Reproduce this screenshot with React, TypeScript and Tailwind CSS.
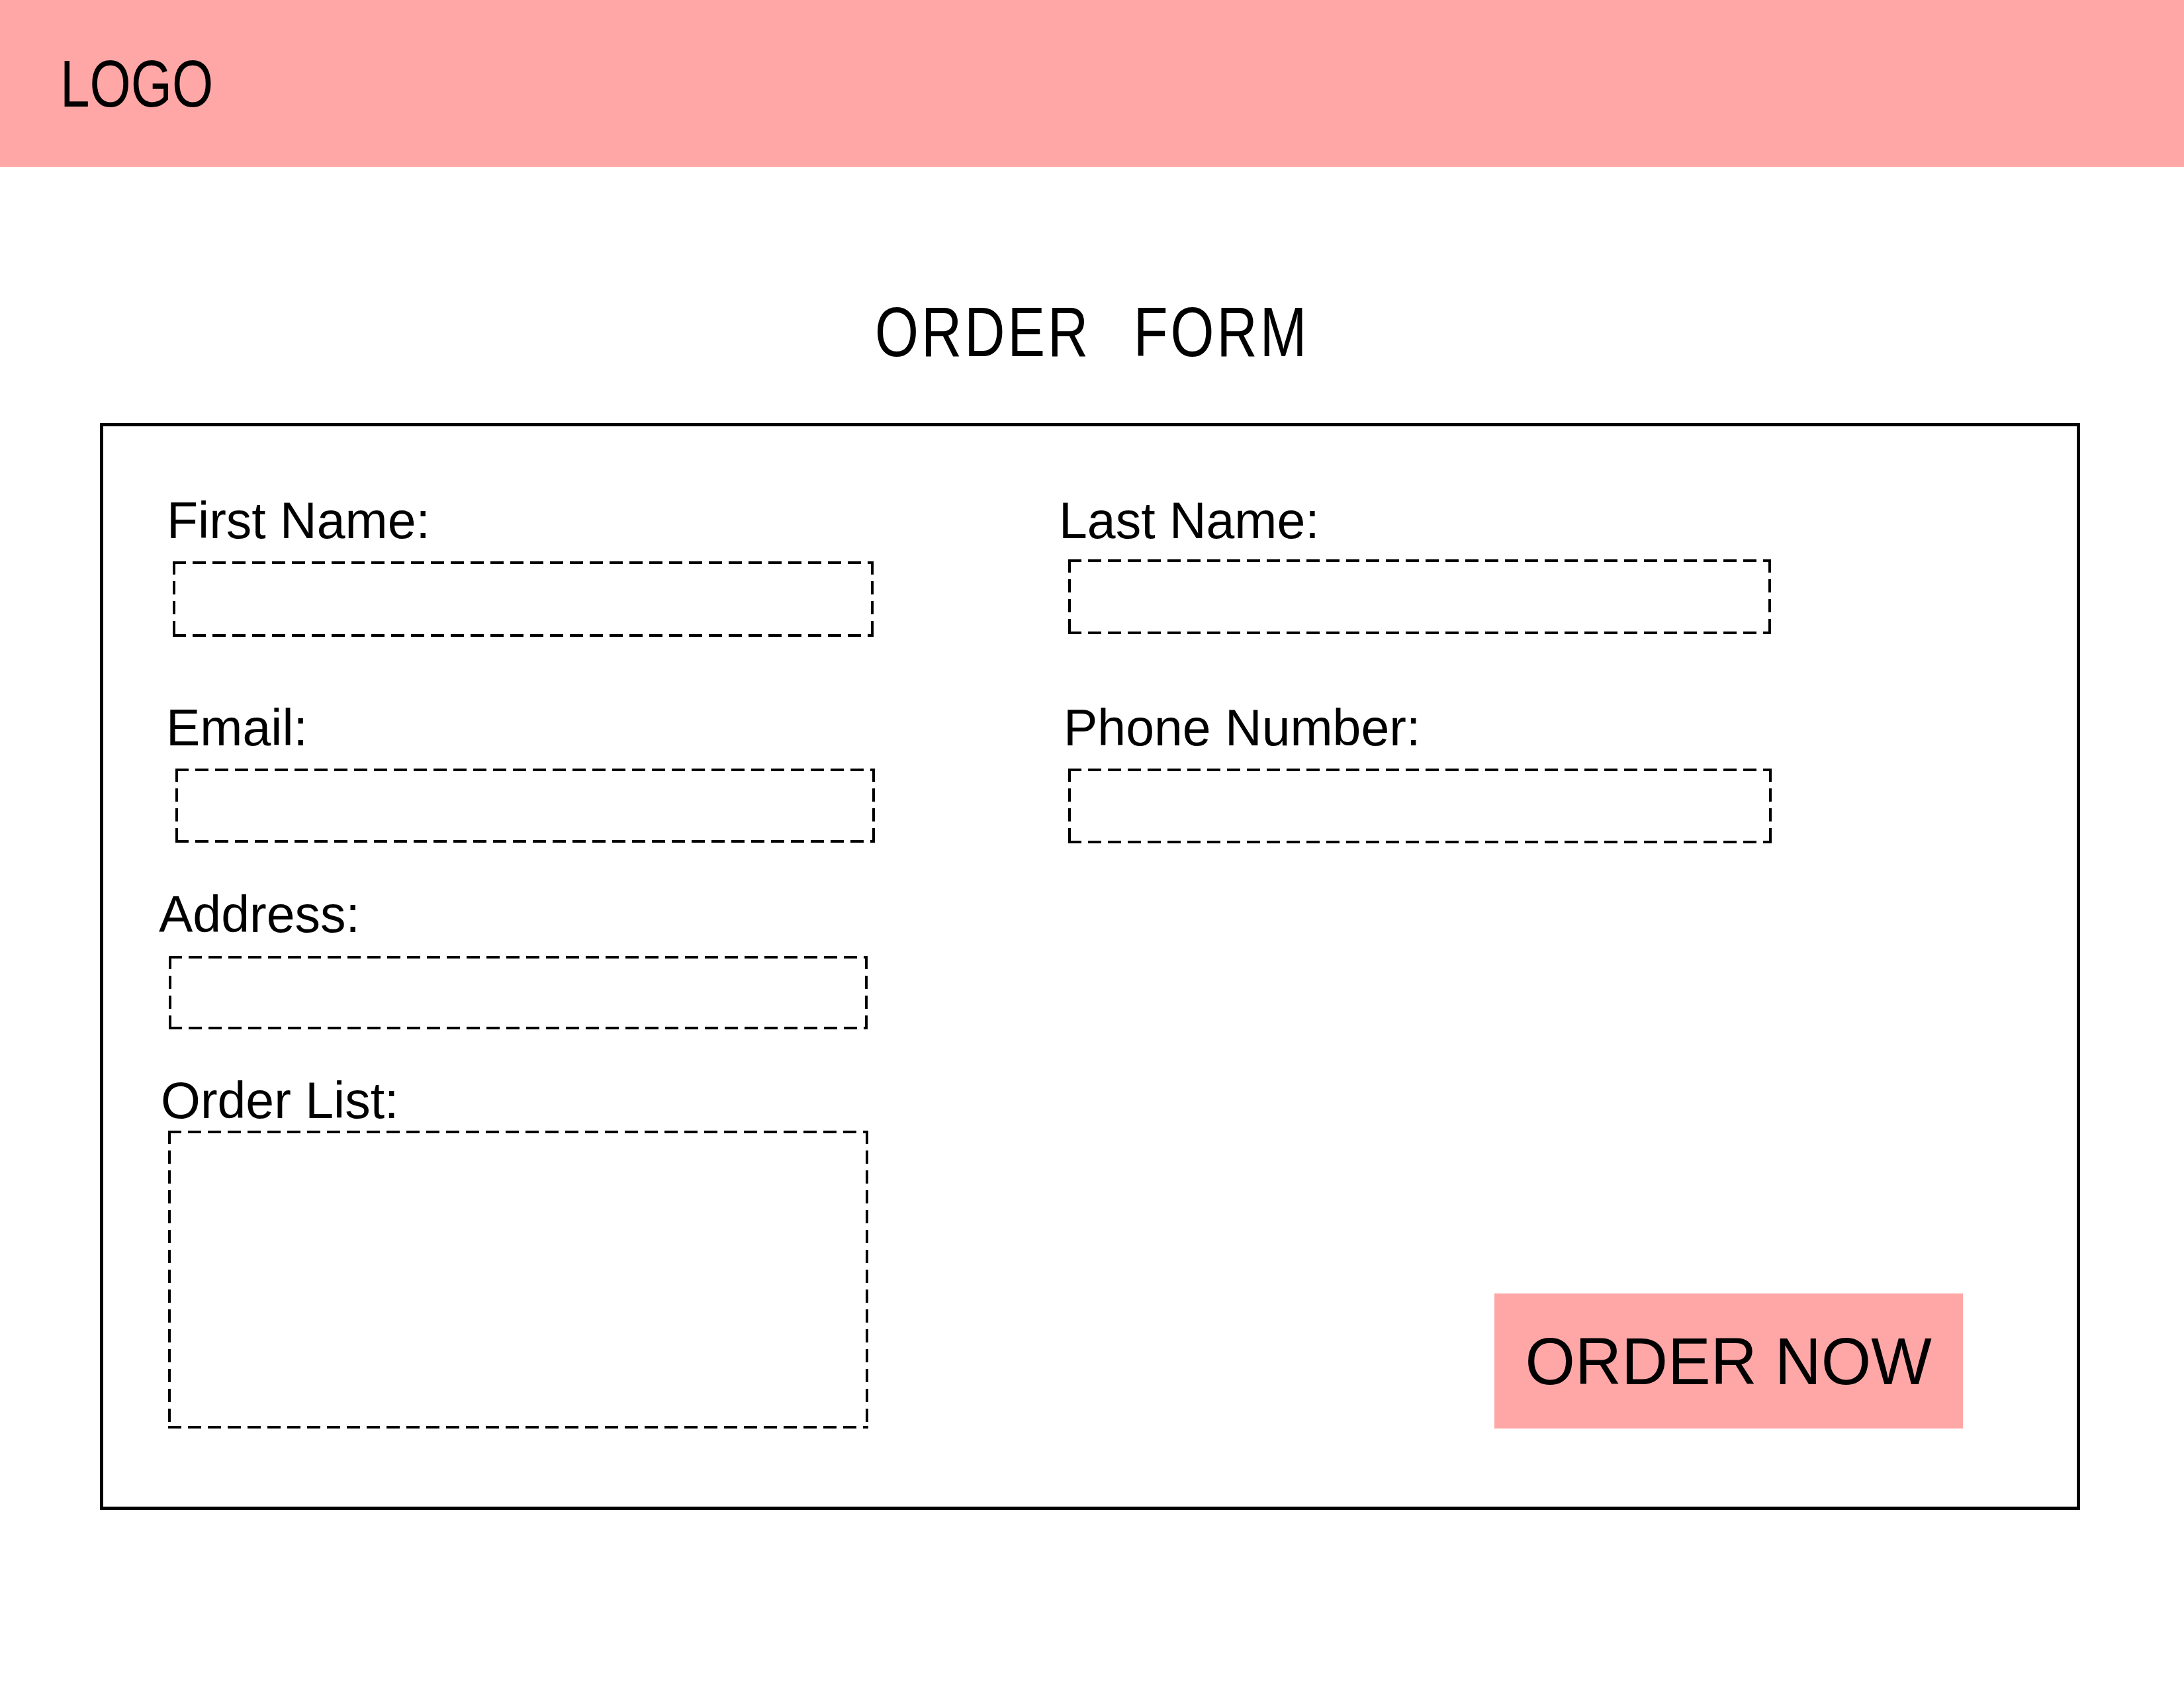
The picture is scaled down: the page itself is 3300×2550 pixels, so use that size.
const font = "font-['Liberation_Sans',Arial,sans-serif]";

// dashed outline drawn with gradients: 20px dash, 10px gap, 4px thick
const dashed =
  "[background:repeating-linear-gradient(90deg,#000_0_20px,transparent_20px_30px)_top_left/100%_4px_no-repeat,repeating-linear-gradient(90deg,#000_0_20px,transparent_20px_30px)_bottom_left/100%_4px_no-repeat,repeating-linear-gradient(180deg,#000_0_20px,transparent_20px_30px)_top_left/4px_100%_no-repeat,repeating-linear-gradient(180deg,#000_0_20px,transparent_20px_30px)_top_right/4px_100%_no-repeat]";

type FieldProps = {
  label: string;
  labelX: string;
  boxX: string;
  boxW: string;
  boxH: string;
  gap: string;
};

function Field({ label, labelX, boxX, boxW, boxH, gap }: FieldProps) {
  return (
    <div className="flex flex-col">
      <label className={`text-[77px] leading-none text-black ${labelX}`}>{label}</label>
      <div className={`${dashed} ${boxX} ${boxW} ${boxH} ${gap}`} />
    </div>
  );
}

export default function App() {
  return (
    <div className={`w-[3300px] h-[2550px] bg-white text-black ${font}`}>
      {/* header */}
      <header className="h-[252px] bg-[#ffa7a7] flex items-center pl-[91px]">
        <span className="text-[100px] leading-none inline-block scale-x-[0.8] origin-left">LOGO</span>
      </header>

      {/* title */}
      <div className="mt-[196px] flex justify-center">
        <h1 className="text-[106px] leading-none font-normal inline-block scale-x-[0.8] tracking-[5px] [word-spacing:46px]">
          ORDER FORM
        </h1>
      </div>

      {/* form card */}
      <form className="mt-[85px] ml-[151px] w-[2992px] border-[5px] border-black pt-[104px] pb-[118px] pl-[84px] pr-[172px] flex flex-col">
        <div className="flex">
          <div className="w-[1360px]">
            <Field label="First Name:" labelX="ml-[12px]" boxX="ml-[21px]" boxW="w-[1059px]" boxH="h-[114px]" gap="mt-[23px]" />
          </div>
          <Field label="Last Name:" labelX="ml-0" boxX="ml-[14px]" boxW="w-[1062px]" boxH="h-[113px]" gap="mt-[20px]" />
        </div>

        <div className="flex mt-[99px]">
          <div className="w-[1360px]">
            <Field label="Email:" labelX="ml-[11px]" boxX="ml-[25px]" boxW="w-[1057px]" boxH="h-[112px]" gap="mt-[23px]" />
          </div>
          <Field label="Phone Number:" labelX="ml-[7px]" boxX="ml-[14px]" boxW="w-[1063px]" boxH="h-[113px]" gap="mt-[23px]" />
        </div>

        <div className="mt-[69px]">
          <Field label="Address:" labelX="ml-0" boxX="ml-[15px]" boxW="w-[1056px]" boxH="h-[111px]" gap="mt-[24px]" />
        </div>

        <div className="mt-[69px] flex justify-between items-end">
          <Field label="Order List:" labelX="ml-[3px]" boxX="ml-[14px]" boxW="w-[1058px]" boxH="h-[450px]" gap="mt-[7px]" />
          <button
            type="button"
            className="w-[708px] h-[204px] bg-[#ffa7a7] text-[100px] leading-none text-black flex items-center justify-center"
          >
            <span className="inline-block scale-x-[0.97]">ORDER NOW</span>
          </button>
        </div>
      </form>
    </div>
  );
}
